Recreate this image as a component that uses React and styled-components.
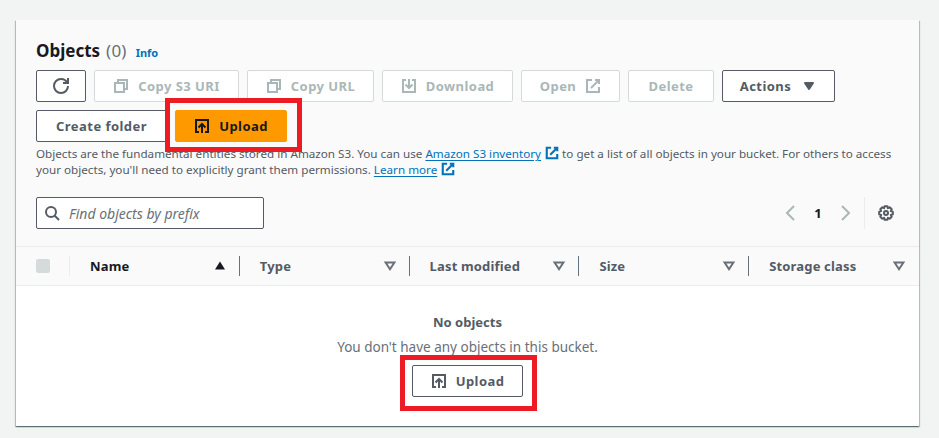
import React from "react";
import styled, { createGlobalStyle } from "styled-components";

const GlobalStyle = createGlobalStyle`
  html, body {
    margin: 0;
    background: #f2f3f3;
    font-family: "Noto Sans", "Open Sans", sans-serif;
    color: #16191f;
  }
`;

const Icon = ({ size = 16, fill, children }) => (
  <svg
    width={size}
    height={size}
    viewBox="0 0 16 16"
    fill={fill || "none"}
    stroke="currentColor"
    strokeWidth="2"
  >
    {children}
  </svg>
);

const RefreshIcon = () => (
  <Icon>
    <path d="M10 5h5V0" />
    <path d="M15 8a6.96 6.96 0 0 1-7 7 6.96 6.96 0 0 1-7-7 6.96 6.96 0 0 1 7-7 6.87 6.87 0 0 1 6.3 4" />
  </Icon>
);
const CopyIcon = () => (
  <Icon>
    <path d="M2 5h9v9H2z" />
    <path d="M5 5V2h9v9h-3" />
  </Icon>
);
const DownloadIcon = () => (
  <Icon>
    <path d="M5 2H2v12h12V2h-3" />
    <path d="M8 1v9" />
    <path d="M4.5 6.5 8 10l3.5-3.5" />
  </Icon>
);
const ExternalIcon = () => (
  <Icon>
    <path d="M10 2h4v4" />
    <path d="M6 10l8-8" />
    <path d="M14 9v5H2V2h5" />
  </Icon>
);
const UploadIcon = () => (
  <Icon>
    <path d="M5 14H2V2h12v12h-3" />
    <path d="M8 15V6" />
    <path d="M4.5 9.5 8 6l3.5 3.5" />
  </Icon>
);
const SearchIcon = () => (
  <Icon>
    <circle cx="7" cy="7" r="5" />
    <path d="M15 15l-4.5-4.5" />
  </Icon>
);
const GearIcon = () => (
  <Icon>
    <circle cx="8" cy="8" r="2" />
    <path d="M6.6 1.2h2.8l.5 2 1.8-.9 2 2-.9 1.8 2 .5v2.8l-2 .5.9 1.8-2 2-1.8-.9-.5 2H6.6l-.5-2-1.8.9-2-2 .9-1.8-2-.5V6.6l2-.5-.9-1.8 2-2 1.8.9z" strokeLinejoin="round" />
  </Icon>
);
const AngleIcon = ({ right }) => (
  <Icon>
    <path d={right ? "M5 1l7 7-7 7" : "M11 1L4 8l7 7"} />
  </Icon>
);
const CaretFilled = () => (
  <svg width="16" height="16" viewBox="0 0 16 16" fill="currentColor" stroke="currentColor" strokeWidth="2" strokeLinejoin="round">
    <path d="M4 5h8l-4 6z" />
  </svg>
);
const SortUp = () => (
  <svg width="14" height="14" viewBox="0 0 14 14" fill="currentColor">
    <path d="M7 2.5 12 10.5H2z" />
  </svg>
);
const SortDown = () => (
  <svg width="14" height="14" viewBox="0 0 14 14" fill="none" stroke="currentColor" strokeWidth="2" strokeLinejoin="miter">
    <path d="M2.6 3.5h8.8L7 10.2z" />
  </svg>
);

const Page = styled.div`
  width: 939px;
  height: 438px;
  overflow: hidden;
  box-sizing: border-box;
  padding: 20px 20px 0 16px;
  position: relative;
`;
const Card = styled.section`
  width: 903px;
  height: 406px;
  background: #fff;
  box-shadow: 0 1px 1px 0 rgba(0, 28, 36, 0.4), 1px 1px 1px 0 rgba(0, 28, 36, 0.2), -1px 1px 1px 0 rgba(0, 28, 36, 0.2);
  display: flex;
  flex-direction: column;
`;
const Header = styled.header`
  background: #fafafa;
  height: 227px;
  box-sizing: border-box;
  padding: 19px 20px 0;
  border-bottom: 1px solid #eaeded;
`;
const TitleRow = styled.div`
  display: flex;
  align-items: baseline;
  height: 24px;
  line-height: 24px;
`;
const Title = styled.h2`
  margin: 0;
  font-size: 17px;
  font-weight: 700;
  color: #16191f;
`;
const Count = styled.span`
  font-size: 17px;
  letter-spacing: 0.2px;
  color: #687078;
  margin-left: 6px;
`;
const InfoLink = styled.a`
  font-size: 11px;
  font-weight: 700;
  color: #0073bb;
  margin-left: 9px;
`;
const ButtonRow = styled.div`
  display: flex;
  gap: 8px;
  margin-top: ${(p) => p.$top || 0}px;
`;
const Button = styled.button`
  box-sizing: border-box;
  width: ${(p) => p.$w}px;
  height: 32px;
  padding: 0;
  display: flex;
  align-items: center;
  justify-content: center;
  gap: ${(p) => p.$gap ?? 9}px;
  border-radius: 2px;
  border: 1px solid #545b64;
  background: #fff;
  color: #545b64;
  font-family: inherit;
  font-size: 13px;
  font-weight: 700;
  letter-spacing: 0.45px;
  &:disabled {
    border-color: #d5dbdb;
    color: #aab7b8;
  }
`;
const PrimaryButton = styled(Button)`
  background: #ff9900;
  border-color: #ff9900;
  color: #16191f;
`;
const Description = styled.p`
  margin: 4px 0 0;
  font-size: 11.66px;
  line-height: 16px;
  color: #545b64;
  width: 865px;
`;
const TextLink = styled.a`
  color: #0073bb;
  text-decoration: underline;
  text-underline-offset: 2px;
  svg {
    vertical-align: -2px;
    margin-left: 4px;
    width: 14px;
    height: 14px;
    display: inline-block;
    stroke-width: 2.4;
  }
`;
const FilterRow = styled.div`
  display: flex;
  justify-content: space-between;
  align-items: center;
  margin-top: 19px;
`;
const FilterBox = styled.div`
  box-sizing: border-box;
  width: 228px;
  height: 32px;
  border: 1px solid #545b64;
  border-radius: 2px;
  background: #fff;
  display: flex;
  align-items: center;
  gap: 9px;
  padding-left: 7px;
  color: #687078;
  font-size: 14px;
  font-style: italic;
  svg {
    flex: none;
    color: #545b64;
  }
`;
const Pager = styled.div`
  display: flex;
  align-items: center;
  height: 32px;
  color: #aab7b8;
  font-size: 13px;
`;
const PageNumber = styled.span`
  color: #16191f;
  font-weight: 700;
  width: 38px;
  text-align: center;
`;
const SettingsCell = styled.div`
  margin-left: 11px;
  height: 32px;
  width: 35px;
  border-left: 1px solid #eaeded;
  display: flex;
  align-items: center;
  color: #545b64;
  padding-left: 13px;
  box-sizing: border-box;
`;
const TableHead = styled.div`
  display: flex;
  height: 39px;
  background: #fafafa;
  border-bottom: 1px solid #eaeded;
  box-sizing: border-box;
  align-items: center;
`;
const CheckCell = styled.div`
  width: 34px;
  margin-left: 20px;
  height: 20px;
  border-right: 1px solid #eaeded;
  display: flex;
  align-items: center;
  box-sizing: border-box;
`;
const CheckBox = styled.span`
  width: 14px;
  height: 14px;
  border-radius: 2px;
  background: #d5dbdb;
`;
const HeadCell = styled.div`
  width: 170px;
  height: 20px;
  box-sizing: border-box;
  padding: 0 ${(p) => (p.$last ? 13 : 12)}px 0 20px;
  display: flex;
  justify-content: space-between;
  align-items: center;
  font-size: 13px;
  font-weight: 700;
  letter-spacing: 0.16px;
  color: ${(p) => (p.$active ? "#16191f" : "#545b64")};
  border-right: ${(p) => (p.$last ? "none" : "1px solid #687078")};
`;
const CaretWrap = styled.span`
  display: flex;
  color: ${(p) => (p.$active ? "#16191f" : "#687078")};
`;
const EmptyState = styled.div`
  flex: 1;
  display: flex;
  flex-direction: column;
  align-items: center;
  padding-top: 27px;
`;
const EmptyTitle = styled.strong`
  font-size: 13px;
  line-height: 18px;
  color: #545b64;
`;
const EmptyText = styled.p`
  margin: 7px 0 9px;
  font-size: 13.5px;
  line-height: 18px;
  color: #687078;
`;
const Highlight = styled.div`
  position: absolute;
  left: ${(p) => p.$x}px;
  top: ${(p) => p.$y}px;
  width: 137px;
  height: ${(p) => p.$h}px;
  box-sizing: border-box;
  border: 5px solid #ed1c24;
  pointer-events: none;
`;

const columns = [
  { name: "Name", active: true },
  { name: "Type" },
  { name: "Last modified" },
  { name: "Size" },
  { name: "Storage class", last: true },
];

export default function App() {
  return (
    <Page>
      <GlobalStyle />
      <Card>
        <Header>
          <TitleRow>
            <Title>Objects</Title>
            <Count>(0)</Count>
            <InfoLink>Info</InfoLink>
          </TitleRow>
          <ButtonRow $top={7}>
            <Button $w={50}>
              <RefreshIcon />
            </Button>
            <Button $w={145} disabled>
              <CopyIcon />
              Copy S3 URI
            </Button>
            <Button $w={127} disabled>
              <CopyIcon />
              Copy URL
            </Button>
            <Button $w={131} disabled>
              <DownloadIcon />
              Download
            </Button>
            <Button $w={99} disabled>
              Open
              <ExternalIcon />
            </Button>
            <Button $w={86} disabled>
              Delete
            </Button>
            <Button $w={113} $gap={10}>
              Actions
              <CaretFilled />
            </Button>
          </ButtonRow>
          <ButtonRow $top={8}>
            <Button $w={131}>Create folder</Button>
            <PrimaryButton $w={112}>
              <UploadIcon />
              Upload
            </PrimaryButton>
          </ButtonRow>
          <Description>
            Objects are the fundamental entities stored in Amazon S3. You can use{" "}
            <TextLink>
              Amazon S3 inventory
              <ExternalIcon />
            </TextLink>{" "}
            to get a list of all objects in your bucket. For others to access your objects, you'll need to explicitly
            grant them permissions.{" "}
            <TextLink>
              Learn more
              <ExternalIcon />
            </TextLink>
          </Description>
          <FilterRow>
            <FilterBox>
              <SearchIcon />
              Find objects by prefix
            </FilterBox>
            <Pager>
              <AngleIcon />
              <PageNumber>1</PageNumber>
              <AngleIcon right />
              <SettingsCell>
                <GearIcon />
              </SettingsCell>
            </Pager>
          </FilterRow>
        </Header>
        <TableHead>
          <CheckCell>
            <CheckBox />
          </CheckCell>
          {columns.map((c) => (
            <HeadCell key={c.name} $active={c.active} $last={c.last}>
              {c.name}
              <CaretWrap $active={c.active}>{c.active ? <SortUp /> : <SortDown />}</CaretWrap>
            </HeadCell>
          ))}
        </TableHead>
        <EmptyState>
          <EmptyTitle>No objects</EmptyTitle>
          <EmptyText>You don't have any objects in this bucket.</EmptyText>
          <Button $w={111}>
            <UploadIcon />
            Upload
          </Button>
        </EmptyState>
      </Card>
      <Highlight $x={165} $y={98} $h={54} />
      <Highlight $x={400} $y={355} $h={56} />
    </Page>
  );
}
